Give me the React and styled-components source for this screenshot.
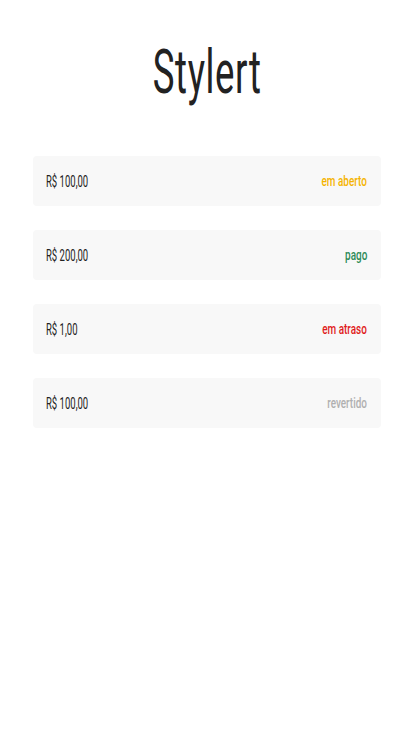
import styled, { createGlobalStyle } from "styled-components";

const GlobalStyle = createGlobalStyle`
  body {
    margin: 0;
    background: #ffffff;
    font-family: Roboto, "Liberation Sans", sans-serif;
  }
`;

const Container = styled.div`
  padding: 0 33px;
`;

const Header = styled.header`
  height: 142px;
  display: flex;
  align-items: center;
  justify-content: center;
`;

const Title = styled.h1`
  margin: 0;
  font-size: 62px;
  font-weight: 400;
  color: #222222;
  transform: scaleX(0.59);
  letter-spacing: 1px;
`;

const List = styled.div`
  display: flex;
  flex-direction: column;
  gap: 24px;
  margin-top: 14px;
`;

const Card = styled.div`
  height: 50px;
  padding: 0 14px 0 13px;
  display: flex;
  align-items: center;
  justify-content: space-between;
  background: #f8f8f8;
  border-radius: 4px;
`;

const Amount = styled.span`
  font-size: 17px;
  color: #222222;
  transform: scaleX(0.56);
  transform-origin: left center;
  white-space: nowrap;
`;

const Status = styled.span`
  font-size: 14px;
  font-weight: 500;
  color: ${(props) => props.color};
  transform: scaleX(0.71);
  transform-origin: right center;
  white-space: nowrap;
`;

const statusColors = {
  "em aberto": "#f5b400",
  pago: "#2e8b57",
  "em atraso": "#e01b1b",
  revertido: "#b0b0b0",
};

const bills = [
  { value: "R$ 100,00", status: "em aberto" },
  { value: "R$ 200,00", status: "pago" },
  { value: "R$ 1,00", status: "em atraso" },
  { value: "R$ 100,00", status: "revertido" },
];

const App = () => {
  return (
    <Container>
      <GlobalStyle />
      <Header>
        <Title>Stylert</Title>
      </Header>
      <List>
        {bills.map((bill, i) => (
          <Card key={i}>
            <Amount>{bill.value}</Amount>
            <Status color={statusColors[bill.status]}>{bill.status}</Status>
          </Card>
        ))}
      </List>
    </Container>
  );
};

export default App;
